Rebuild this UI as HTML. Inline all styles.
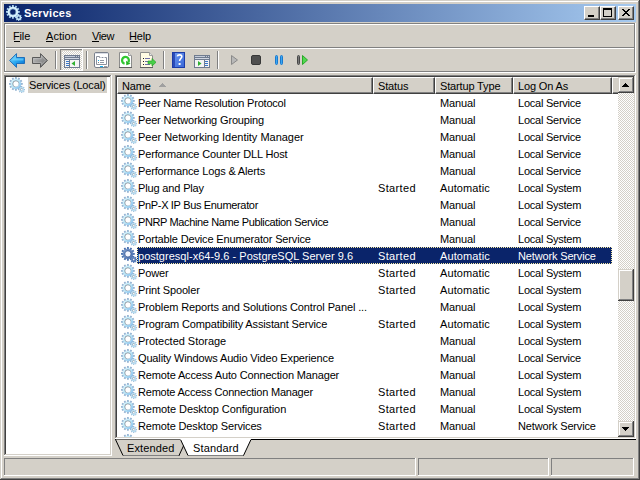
<!DOCTYPE html><html><head><meta charset="utf-8"><title>Services</title><style>
*{margin:0;padding:0;box-sizing:border-box}
html,body{width:640px;height:480px;overflow:hidden;background:#d4d0c8;font-family:"Liberation Sans",sans-serif;font-size:11px;color:#000}
.a{position:absolute}
.t{position:absolute;white-space:nowrap;letter-spacing:-0.15px;line-height:17px}
</style></head><body><svg width="0" height="0" style="position:absolute"><defs><linearGradient id="gg" x1="0" y1="0" x2="1" y2="1"><stop offset="0" stop-color="#e0f8ff"/><stop offset="0.5" stop-color="#b8e6f8"/><stop offset="1" stop-color="#7ab8ee"/></linearGradient><linearGradient id="grim" x1="0" y1="0" x2="1" y2="1"><stop offset="0" stop-color="#5c6670"/><stop offset="0.6" stop-color="#8898a8"/><stop offset="1" stop-color="#b0d8f4"/></linearGradient><linearGradient id="ggS" x1="0" y1="0" x2="1" y2="1"><stop offset="0" stop-color="#7c9ccc"/><stop offset="1" stop-color="#4a70b0"/></linearGradient><symbol id="gearN" viewBox="0 0 16 16"><path d="M7.95,2.30 L7.79,0.00 L6.01,-0.00 L5.85,2.30ZM10.11,3.44 L11.12,1.37 L9.58,0.48 L8.29,2.39ZM11.41,5.51 L13.32,4.22 L12.43,2.68 L10.36,3.69ZM11.50,7.95 L13.80,7.79 L13.80,6.01 L11.50,5.85ZM10.36,10.11 L12.43,11.12 L13.32,9.58 L11.41,8.29ZM8.29,11.41 L9.58,13.32 L11.12,12.43 L10.11,10.36ZM5.85,11.50 L6.01,13.80 L7.79,13.80 L7.95,11.50ZM3.69,10.36 L2.68,12.43 L4.22,13.32 L5.51,11.41ZM2.39,8.29 L0.48,9.58 L1.37,11.12 L3.44,10.11ZM2.30,5.85 L-0.00,6.01 L0.00,7.79 L2.30,7.95ZM3.44,3.69 L1.37,2.68 L0.48,4.22 L2.39,5.51ZM5.51,2.39 L4.22,0.48 L2.68,1.37 L3.69,3.44Z" fill="#98b6d4"/><path d="M1.70,6.90 a5.2,5.2 0 1,0 10.4,0 a5.2,5.2 0 1,0 -10.4,0ZM3.90,6.90 a3.0,3.0 0 1,0 6.0,0 a3.0,3.0 0 1,0 -6.0,0Z" fill="url(#gg)" fill-rule="evenodd"/><circle cx="6.9" cy="6.9" r="3.0" fill="#fff"/><circle cx="6.9" cy="6.9" r="3.1" fill="none" stroke="url(#grim)" stroke-width="0.7"/><path d="M15.00,13.20 L16.20,13.11 L16.20,12.09 L15.00,12.00ZM13.90,14.65 L14.81,15.44 L15.54,14.71 L14.75,13.80ZM12.10,14.90 L12.19,16.10 L13.21,16.10 L13.30,14.90ZM10.65,13.80 L9.86,14.71 L10.59,15.44 L11.50,14.65ZM10.40,12.00 L9.20,12.09 L9.20,13.11 L10.40,13.20ZM11.50,10.55 L10.59,9.76 L9.86,10.49 L10.65,11.40ZM13.30,10.30 L13.21,9.10 L12.19,9.10 L12.10,10.30ZM14.75,11.40 L15.54,10.49 L14.81,9.76 L13.90,10.55Z" fill="#98b6d4"/><path d="M10.10,12.60 a2.6,2.6 0 1,0 5.2,0 a2.6,2.6 0 1,0 -5.2,0ZM11.70,12.60 a1.0,1.0 0 1,0 2.0,0 a1.0,1.0 0 1,0 -2.0,0Z" fill="#b8def2" fill-rule="evenodd"/><circle cx="12.7" cy="12.6" r="1.0" fill="#fff"/><circle cx="12.7" cy="12.6" r="1.1" fill="none" stroke="url(#grim)" stroke-width="0.5"/></symbol><symbol id="gearS" viewBox="0 0 16 16"><path d="M7.95,2.30 L7.79,0.00 L6.01,-0.00 L5.85,2.30ZM10.11,3.44 L11.12,1.37 L9.58,0.48 L8.29,2.39ZM11.41,5.51 L13.32,4.22 L12.43,2.68 L10.36,3.69ZM11.50,7.95 L13.80,7.79 L13.80,6.01 L11.50,5.85ZM10.36,10.11 L12.43,11.12 L13.32,9.58 L11.41,8.29ZM8.29,11.41 L9.58,13.32 L11.12,12.43 L10.11,10.36ZM5.85,11.50 L6.01,13.80 L7.79,13.80 L7.95,11.50ZM3.69,10.36 L2.68,12.43 L4.22,13.32 L5.51,11.41ZM2.39,8.29 L0.48,9.58 L1.37,11.12 L3.44,10.11ZM2.30,5.85 L-0.00,6.01 L0.00,7.79 L2.30,7.95ZM3.44,3.69 L1.37,2.68 L0.48,4.22 L2.39,5.51ZM5.51,2.39 L4.22,0.48 L2.68,1.37 L3.69,3.44Z" fill="#4c72b0"/><path d="M1.70,6.90 a5.2,5.2 0 1,0 10.4,0 a5.2,5.2 0 1,0 -10.4,0ZM3.90,6.90 a3.0,3.0 0 1,0 6.0,0 a3.0,3.0 0 1,0 -6.0,0Z" fill="url(#ggS)" fill-rule="evenodd"/><circle cx="6.9" cy="6.9" r="3.0" fill="#f4f6ff"/><circle cx="6.9" cy="6.9" r="3.1" fill="none" stroke="#284a88" stroke-width="0.7"/><path d="M15.00,13.20 L16.20,13.11 L16.20,12.09 L15.00,12.00ZM13.90,14.65 L14.81,15.44 L15.54,14.71 L14.75,13.80ZM12.10,14.90 L12.19,16.10 L13.21,16.10 L13.30,14.90ZM10.65,13.80 L9.86,14.71 L10.59,15.44 L11.50,14.65ZM10.40,12.00 L9.20,12.09 L9.20,13.11 L10.40,13.20ZM11.50,10.55 L10.59,9.76 L9.86,10.49 L10.65,11.40ZM13.30,10.30 L13.21,9.10 L12.19,9.10 L12.10,10.30ZM14.75,11.40 L15.54,10.49 L14.81,9.76 L13.90,10.55Z" fill="#4c72b0"/><path d="M10.10,12.60 a2.6,2.6 0 1,0 5.2,0 a2.6,2.6 0 1,0 -5.2,0ZM11.70,12.60 a1.0,1.0 0 1,0 2.0,0 a1.0,1.0 0 1,0 -2.0,0Z" fill="#5a80bc" fill-rule="evenodd"/><circle cx="12.7" cy="12.6" r="1.0" fill="#f4f6ff"/><circle cx="12.7" cy="12.6" r="1.1" fill="none" stroke="#284a88" stroke-width="0.5"/></symbol><symbol id="gearT" viewBox="0 0 16 16"><path d="M7.95,2.30 L7.79,0.00 L6.01,-0.00 L5.85,2.30ZM10.11,3.44 L11.12,1.37 L9.58,0.48 L8.29,2.39ZM11.41,5.51 L13.32,4.22 L12.43,2.68 L10.36,3.69ZM11.50,7.95 L13.80,7.79 L13.80,6.01 L11.50,5.85ZM10.36,10.11 L12.43,11.12 L13.32,9.58 L11.41,8.29ZM8.29,11.41 L9.58,13.32 L11.12,12.43 L10.11,10.36ZM5.85,11.50 L6.01,13.80 L7.79,13.80 L7.95,11.50ZM3.69,10.36 L2.68,12.43 L4.22,13.32 L5.51,11.41ZM2.39,8.29 L0.48,9.58 L1.37,11.12 L3.44,10.11ZM2.30,5.85 L-0.00,6.01 L0.00,7.79 L2.30,7.95ZM3.44,3.69 L1.37,2.68 L0.48,4.22 L2.39,5.51ZM5.51,2.39 L4.22,0.48 L2.68,1.37 L3.69,3.44Z" fill="#a8d0ec"/><path d="M1.70,6.90 a5.2,5.2 0 1,0 10.4,0 a5.2,5.2 0 1,0 -10.4,0ZM3.90,6.90 a3.0,3.0 0 1,0 6.0,0 a3.0,3.0 0 1,0 -6.0,0Z" fill="#dcf4ff" fill-rule="evenodd"/><circle cx="6.9" cy="6.9" r="3.1" fill="none" stroke="#8ab0d0" stroke-width="0.7"/><path d="M15.00,13.20 L16.20,13.11 L16.20,12.09 L15.00,12.00ZM13.90,14.65 L14.81,15.44 L15.54,14.71 L14.75,13.80ZM12.10,14.90 L12.19,16.10 L13.21,16.10 L13.30,14.90ZM10.65,13.80 L9.86,14.71 L10.59,15.44 L11.50,14.65ZM10.40,12.00 L9.20,12.09 L9.20,13.11 L10.40,13.20ZM11.50,10.55 L10.59,9.76 L9.86,10.49 L10.65,11.40ZM13.30,10.30 L13.21,9.10 L12.19,9.10 L12.10,10.30ZM14.75,11.40 L15.54,10.49 L14.81,9.76 L13.90,10.55Z" fill="#a8d0ec"/><path d="M10.10,12.60 a2.6,2.6 0 1,0 5.2,0 a2.6,2.6 0 1,0 -5.2,0ZM11.70,12.60 a1.0,1.0 0 1,0 2.0,0 a1.0,1.0 0 1,0 -2.0,0Z" fill="#c8e8f8" fill-rule="evenodd"/><circle cx="12.7" cy="12.6" r="1.1" fill="none" stroke="#8ab0d0" stroke-width="0.5"/></symbol></defs></svg><div class="a" style="left:0px;top:0px;width:640px;height:480px;background:#d4d0c8;"></div><div class="a" style="left:0px;top:479px;width:640px;height:1px;background:#404040;"></div><div class="a" style="left:639px;top:0px;width:1px;height:480px;background:#404040;"></div><div class="a" style="left:1px;top:478px;width:638px;height:1px;background:#808080;"></div><div class="a" style="left:638px;top:1px;width:1px;height:478px;background:#808080;"></div><div class="a" style="left:1px;top:1px;width:637px;height:1px;background:#fff;"></div><div class="a" style="left:1px;top:1px;width:1px;height:477px;background:#fff;"></div><div class="a" style="left:4px;top:4px;width:632px;height:18px;background:linear-gradient(to right,#0a246a,#a6caf0);"></div><svg class="a" style="left:6px;top:5px" width="16" height="16" viewBox="0 0 16 16"><use href="#gearT"/></svg><div class="t" style="left:24px;top:4px;color:#fff;font-weight:bold;letter-spacing:0.3px;line-height:18px">Services</div><div class="a" style="left:584px;top:6px;width:16px;height:14px;background:#d4d0c8;border-top:1px solid #fff;border-left:1px solid #fff;border-right:1px solid #404040;border-bottom:1px solid #404040;box-shadow:inset -1px -1px 0 #808080"><div class="a" style="left:3px;top:8px;width:6px;height:2px;background:#000"></div></div><div class="a" style="left:600px;top:6px;width:16px;height:14px;background:#d4d0c8;border-top:1px solid #fff;border-left:1px solid #fff;border-right:1px solid #404040;border-bottom:1px solid #404040;box-shadow:inset -1px -1px 0 #808080"><div class="a" style="left:2px;top:1px;width:9px;height:9px;border:1px solid #000;border-top-width:2px"></div></div><div class="a" style="left:618px;top:6px;width:16px;height:14px;background:#d4d0c8;border-top:1px solid #fff;border-left:1px solid #fff;border-right:1px solid #404040;border-bottom:1px solid #404040;box-shadow:inset -1px -1px 0 #808080"><svg class="a" style="left:3px;top:2px" width="8" height="7" viewBox="0 0 8 7"><path d="M0,0h2l2,2.3l2,-2.3h2l-3,3.5l3,3.5h-2l-2,-2.3l-2,2.3h-2l3,-3.5z" fill="#000" shape-rendering="crispEdges"/></svg></div><div class="a" style="left:4px;top:23px;width:632px;height:1px;background:#808080;"></div><div class="a" style="left:4px;top:23px;width:1px;height:49px;background:#808080;"></div><div class="a" style="left:5px;top:24px;width:630px;height:1px;background:#fff;"></div><div class="a" style="left:5px;top:24px;width:1px;height:47px;background:#fff;"></div><div class="a" style="left:634px;top:24px;width:1px;height:48px;background:#808080;"></div><div class="a" style="left:635px;top:23px;width:1px;height:50px;background:#fff;"></div><div class="a" style="left:6px;top:47px;width:628px;height:1px;background:#808080;"></div><div class="a" style="left:6px;top:48px;width:628px;height:1px;background:#fff;"></div><div class="a" style="left:4px;top:71px;width:631px;height:1px;background:#808080;"></div><div class="a" style="left:4px;top:72px;width:632px;height:1px;background:#fff;"></div><div class="t" style="left:13px;top:28px;line-height:17px;letter-spacing:-0.15px">File</div><div class="a" style="left:14px;top:41px;width:6px;height:1px;background:#000;"></div><div class="t" style="left:46px;top:28px;line-height:17px;letter-spacing:0.05px">Action</div><div class="a" style="left:46px;top:41px;width:7px;height:1px;background:#000;"></div><div class="t" style="left:92px;top:28px;line-height:17px;letter-spacing:-0.4px">View</div><div class="a" style="left:92px;top:41px;width:7px;height:1px;background:#000;"></div><div class="t" style="left:129px;top:28px;line-height:17px;letter-spacing:-0.15px">Help</div><div class="a" style="left:130px;top:41px;width:8px;height:1px;background:#000;"></div><svg class="a" style="left:0;top:48px" width="320" height="24" viewBox="0 48 320 24"><defs><linearGradient id="gBack" x1="0" y1="0" x2="1" y2="1"><stop offset="0" stop-color="#8ee0ff"/><stop offset="0.5" stop-color="#2aa8f0"/><stop offset="1" stop-color="#0066cc"/></linearGradient><linearGradient id="gFwd" x1="0" y1="0" x2="1" y2="1"><stop offset="0" stop-color="#c8c8c8"/><stop offset="0.5" stop-color="#969696"/><stop offset="1" stop-color="#6e6e6e"/></linearGradient><linearGradient id="gHelp" x1="0" y1="0" x2="1" y2="1"><stop offset="0" stop-color="#6c98f0"/><stop offset="1" stop-color="#3a68d8"/></linearGradient><pattern id="dith" width="2" height="2" patternUnits="userSpaceOnUse"><rect width="2" height="2" fill="#d4d0c8"/><rect width="1" height="1" fill="#fff"/><rect x="1" y="1" width="1" height="1" fill="#fff"/></pattern></defs><path d="M9.6,60.5 L16.5,53.6 V57.5 H24.5 V63.5 H16.5 V67.4 Z" fill="url(#gBack)" stroke="#1468b8" stroke-width="0.9" stroke-linejoin="miter"/><path d="M11.5,60.3 L15.8,56 V58.6 H23.3 V60.6 H15.8 Z" fill="#7ad8ff" opacity="0.6"/><path d="M47.4,60.5 L40.5,53.6 V57.5 H32.5 V63.5 H40.5 V67.4 Z" fill="url(#gFwd)" stroke="#4e4e4e" stroke-width="0.9"/><path d="M33.7,58.6 H41.3 V56 L45.5,60.3 L41.3,64.6 V62.4 H33.7 Z" fill="none" stroke="#d8d8d8" stroke-width="0.5" opacity="0.7"/><rect x="55" y="51" width="1" height="18" fill="#808080"/><rect x="56" y="51" width="1" height="18" fill="#fff"/><rect x="86" y="51" width="1" height="18" fill="#808080"/><rect x="87" y="51" width="1" height="18" fill="#fff"/><rect x="163" y="51" width="1" height="18" fill="#808080"/><rect x="164" y="51" width="1" height="18" fill="#fff"/><rect x="217" y="51" width="1" height="18" fill="#808080"/><rect x="218" y="51" width="1" height="18" fill="#fff"/><rect x="60" y="49" width="23" height="22" fill="#fff"/><rect x="60" y="49" width="22" height="21" fill="#808080"/><rect x="61" y="50" width="21" height="20" fill="url(#dith)"/><rect x="61" y="50" width="21" height="1" fill="#d4d0c8"/><rect x="61" y="50" width="1" height="20" fill="#d4d0c8"/><rect x="64.5" y="55.5" width="15" height="12" fill="#f4f4f4" stroke="#6f7b8f"/><rect x="65" y="56" width="14" height="1" fill="#c4ccda"/><rect x="65" y="57" width="14" height="1" fill="#6f7b8f"/><rect x="65" y="58" width="14" height="1" fill="#d0d6e2"/><rect x="65" y="59" width="14" height="1" fill="#6f7b8f"/><rect x="75" y="56" width="1" height="1" fill="#6f7b8f"/><rect x="77" y="56" width="1" height="1" fill="#6f7b8f"/><rect x="69" y="60" width="1" height="7" fill="#6f7b8f"/><rect x="66" y="61" width="3" height="1" fill="#3a78c8"/><rect x="66" y="63" width="3" height="1" fill="#3a78c8"/><rect x="66" y="65" width="3" height="1" fill="#3a78c8"/><path d="M71.5,63.5 L75,61 V66 Z" fill="#30b030"/><rect x="94.5" y="52.5" width="14" height="15" rx="1.5" fill="#fff" stroke="#7a808c"/><rect x="95" y="53" width="13" height="1" fill="#d8dce4"/><path d="M96.5,56.5 H99.5 V57.5 H106.5 V64.5 H96.5 Z" fill="#fff" stroke="#8a909c"/><rect x="100" y="57" width="2" height="1" fill="#c8ccd4"/><rect x="103" y="57" width="2" height="1" fill="#c8ccd4"/><rect x="98" y="60" width="1" height="1" fill="#10b0f0"/><rect x="98" y="62" width="1" height="1" fill="#808080"/><rect x="100" y="60" width="4" height="1" fill="#9098a4"/><rect x="100" y="62" width="4" height="1" fill="#9098a4"/><rect x="100" y="66" width="3" height="1" fill="#10b0f0"/><rect x="104" y="66" width="3" height="1" fill="#a0a0a0"/><path d="M119.5,52.5 H128.5 L131.5,55.5 V67.5 H119.5 Z" fill="#fff" stroke="#8c8c8c"/><path d="M128.5,52.5 V55.5 H131.5" fill="#e8e8e8" stroke="#a0a0a0"/><rect x="119" y="67" width="13" height="1" fill="#606060"/><path d="M124.6,63.65 A3.4,3.4 0 1,1 128.29,62.25" fill="none" stroke="#30c830" stroke-width="2.3"/><path d="M130.5,63.8 L126.1,60.7 L126.3,65.2 Z" fill="#22b422"/><path d="M140.5,52.5 H149.5 L152.5,55.5 V67.5 H140.5 Z" fill="#fffbe4" stroke="#8c8c8c"/><path d="M149.5,52.5 V55.5 H152.5" fill="#e8e8e8" stroke="#a0a0a0"/><rect x="140" y="67" width="13" height="1" fill="#606060"/><rect x="143" y="58" width="1" height="1" fill="#202020"/><rect x="143" y="61" width="1" height="1" fill="#202020"/><rect x="143" y="64" width="1" height="1" fill="#202020"/><rect x="145" y="58" width="5" height="1" fill="#7070a8"/><rect x="145" y="61" width="5" height="1" fill="#7070a8"/><rect x="145" y="64" width="5" height="1" fill="#7070a8"/><path d="M148,61 H152 V58.5 L156,62.3 L152,66 V63.8 H148 Z" fill="#48d048" stroke="#28a028" stroke-width="0.7"/><rect x="172" y="52" width="13" height="16" fill="#1c3ca8"/><rect x="173" y="53" width="11" height="14" fill="url(#gHelp)"/><rect x="173" y="53" width="2" height="14" fill="#2c4cb8"/><path d="M177.3,56.3 C177.6,54.4 181.8,54.2 181.8,56.6 C181.8,58.4 179.6,58.8 179.6,61" fill="none" stroke="#fff" stroke-width="1.6"/><rect x="178.6" y="63" width="2" height="2" fill="#fff"/><rect x="194.5" y="55.5" width="15" height="12" fill="#f4f4f4" stroke="#6f7b8f"/><rect x="195" y="56" width="14" height="1" fill="#c4ccda"/><rect x="195" y="57" width="14" height="1" fill="#6f7b8f"/><rect x="195" y="58" width="14" height="1" fill="#d0d6e2"/><rect x="195" y="59" width="14" height="1" fill="#6f7b8f"/><rect x="205" y="56" width="1" height="1" fill="#6f7b8f"/><rect x="207" y="56" width="1" height="1" fill="#6f7b8f"/><rect x="204" y="60" width="1" height="7" fill="#6f7b8f"/><rect x="205" y="61" width="3" height="1" fill="#3a78c8"/><rect x="205" y="63" width="3" height="1" fill="#3a78c8"/><rect x="205" y="65" width="3" height="1" fill="#3a78c8"/><path d="M198,61 L201.5,63.5 L198,66 Z" fill="#30b030"/><path d="M231.5,55.5 L237.5,60 L231.5,64.5 Z" fill="#b8b8b8" stroke="#8a8a8a"/><rect x="251.5" y="55.5" width="9" height="9" rx="1.5" fill="#505050" stroke="#383838"/><rect x="275.5" y="55.5" width="2" height="9" rx="1" fill="#3aa8f0" stroke="#1a78d0"/><rect x="280.5" y="55.5" width="2" height="9" rx="1" fill="#3aa8f0" stroke="#1a78d0"/><rect x="297.5" y="55.5" width="2" height="9" rx="1" fill="#787878" stroke="#484848"/><path d="M302.5,55.5 L307.5,60 L302.5,64.5 Z" fill="#50d850" stroke="#28a828"/></svg><div class="a" style="left:4px;top:75px;width:108px;height:381px;background:#fff;"></div><div class="a" style="left:4px;top:75px;width:107px;height:380px;background:#808080;"></div><div class="a" style="left:5px;top:76px;width:106px;height:379px;background:#d4d0c8;"></div><div class="a" style="left:5px;top:76px;width:105px;height:378px;background:#404040;"></div><div class="a" style="left:6px;top:77px;width:104px;height:377px;background:#fff;"></div><div class="a" style="left:115px;top:75px;width:521px;height:364px;background:#fff;"></div><div class="a" style="left:115px;top:75px;width:520px;height:363px;background:#808080;"></div><div class="a" style="left:116px;top:76px;width:519px;height:362px;background:#d4d0c8;"></div><div class="a" style="left:116px;top:76px;width:518px;height:361px;background:#404040;"></div><div class="a" style="left:117px;top:77px;width:517px;height:360px;background:#fff;"></div><svg class="a" style="left:9px;top:77px" width="16" height="16" viewBox="0 0 16 16"><use href="#gearN"/></svg><div class="a" style="left:28px;top:77px;width:79px;height:16px;background:#d4d0c8;"></div><div class="t" style="left:29px;top:77px;line-height:16px">Services (Local)</div><div class="a" style="left:117px;top:77px;width:256px;height:17px;background:#d4d0c8;border-left:1px solid #fff;border-top:1px solid #fff;border-right:1px solid #404040;border-bottom:1px solid #404040;box-shadow:inset -1px -1px 0 #808080"></div><div class="t" style="left:122px;top:78px;line-height:17px">Name</div><div class="a" style="left:373px;top:77px;width:62px;height:17px;background:#d4d0c8;border-left:1px solid #fff;border-top:1px solid #fff;border-right:1px solid #404040;border-bottom:1px solid #404040;box-shadow:inset -1px -1px 0 #808080"></div><div class="t" style="left:378px;top:78px;line-height:17px">Status</div><div class="a" style="left:435px;top:77px;width:78px;height:17px;background:#d4d0c8;border-left:1px solid #fff;border-top:1px solid #fff;border-right:1px solid #404040;border-bottom:1px solid #404040;box-shadow:inset -1px -1px 0 #808080"></div><div class="t" style="left:440px;top:78px;line-height:17px">Startup Type</div><div class="a" style="left:513px;top:77px;width:99px;height:17px;background:#d4d0c8;border-left:1px solid #fff;border-top:1px solid #fff;border-right:1px solid #404040;border-bottom:1px solid #404040;box-shadow:inset -1px -1px 0 #808080"></div><div class="t" style="left:518px;top:78px;line-height:17px">Log On As</div><div class="a" style="left:612px;top:77px;width:22px;height:17px;background:#d4d0c8;border-left:1px solid #fff;border-top:1px solid #fff;border-right:1px solid #404040;border-bottom:1px solid #404040;box-shadow:inset -1px -1px 0 #808080"></div><svg class="a" style="left:159px;top:83px" width="7" height="4" viewBox="0 0 7 4"><path d="M3,0h1v1h1v1h1v1h1v1h-7v-1h1v-1h1v-1h1z" fill="#a0a0a0" shape-rendering="crispEdges"/></svg><svg class="a" style="left:121px;top:94px" width="16" height="16" viewBox="0 0 16 16"><use href="#gearN"/></svg><div class="t" style="left:138px;top:95px;letter-spacing:-0.22px;">Peer Name Resolution Protocol</div><div class="t" style="left:440px;top:95px;">Manual</div><div class="t" style="left:518px;top:95px;letter-spacing:-0.24px;">Local Service</div><svg class="a" style="left:121px;top:111px" width="16" height="16" viewBox="0 0 16 16"><use href="#gearN"/></svg><div class="t" style="left:138px;top:112px;">Peer Networking Grouping</div><div class="t" style="left:440px;top:112px;">Manual</div><div class="t" style="left:518px;top:112px;letter-spacing:-0.24px;">Local Service</div><svg class="a" style="left:121px;top:128px" width="16" height="16" viewBox="0 0 16 16"><use href="#gearN"/></svg><div class="t" style="left:138px;top:129px;letter-spacing:-0.02px;">Peer Networking Identity Manager</div><div class="t" style="left:440px;top:129px;">Manual</div><div class="t" style="left:518px;top:129px;letter-spacing:-0.24px;">Local Service</div><svg class="a" style="left:121px;top:145px" width="16" height="16" viewBox="0 0 16 16"><use href="#gearN"/></svg><div class="t" style="left:138px;top:146px;">Performance Counter DLL Host</div><div class="t" style="left:440px;top:146px;">Manual</div><div class="t" style="left:518px;top:146px;letter-spacing:-0.24px;">Local Service</div><svg class="a" style="left:121px;top:162px" width="16" height="16" viewBox="0 0 16 16"><use href="#gearN"/></svg><div class="t" style="left:138px;top:163px;">Performance Logs &amp; Alerts</div><div class="t" style="left:440px;top:163px;">Manual</div><div class="t" style="left:518px;top:163px;letter-spacing:-0.24px;">Local Service</div><svg class="a" style="left:121px;top:179px" width="16" height="16" viewBox="0 0 16 16"><use href="#gearN"/></svg><div class="t" style="left:138px;top:180px;">Plug and Play</div><div class="t" style="left:378px;top:180px;letter-spacing:0.35px;">Started</div><div class="t" style="left:440px;top:180px;letter-spacing:0.1px;">Automatic</div><div class="t" style="left:518px;top:180px;letter-spacing:-0.24px;">Local System</div><svg class="a" style="left:121px;top:196px" width="16" height="16" viewBox="0 0 16 16"><use href="#gearN"/></svg><div class="t" style="left:138px;top:197px;letter-spacing:-0.33px;">PnP-X IP Bus Enumerator</div><div class="t" style="left:440px;top:197px;">Manual</div><div class="t" style="left:518px;top:197px;letter-spacing:-0.24px;">Local System</div><svg class="a" style="left:121px;top:213px" width="16" height="16" viewBox="0 0 16 16"><use href="#gearN"/></svg><div class="t" style="left:138px;top:214px;letter-spacing:-0.37px;">PNRP Machine Name Publication Service</div><div class="t" style="left:440px;top:214px;">Manual</div><div class="t" style="left:518px;top:214px;letter-spacing:-0.24px;">Local Service</div><svg class="a" style="left:121px;top:230px" width="16" height="16" viewBox="0 0 16 16"><use href="#gearN"/></svg><div class="t" style="left:138px;top:231px;">Portable Device Enumerator Service</div><div class="t" style="left:440px;top:231px;">Manual</div><div class="t" style="left:518px;top:231px;letter-spacing:-0.24px;">Local System</div><div class="a" style="left:137px;top:247px;width:475px;height:17px;background:#0a246a;outline:1px dotted #f5e9a0;outline-offset:-1px"></div><svg class="a" style="left:121px;top:247px" width="16" height="16" viewBox="0 0 16 16"><use href="#gearS"/></svg><div class="t" style="left:138px;top:248px;color:#fff;letter-spacing:0.02px;">postgresql-x64-9.6 - PostgreSQL Server 9.6</div><div class="t" style="left:378px;top:248px;color:#fff;letter-spacing:0.35px;">Started</div><div class="t" style="left:440px;top:248px;color:#fff;letter-spacing:0.1px;">Automatic</div><div class="t" style="left:518px;top:248px;color:#fff;">Network Service</div><svg class="a" style="left:121px;top:264px" width="16" height="16" viewBox="0 0 16 16"><use href="#gearN"/></svg><div class="t" style="left:138px;top:265px;">Power</div><div class="t" style="left:378px;top:265px;letter-spacing:0.35px;">Started</div><div class="t" style="left:440px;top:265px;letter-spacing:0.1px;">Automatic</div><div class="t" style="left:518px;top:265px;letter-spacing:-0.24px;">Local System</div><svg class="a" style="left:121px;top:281px" width="16" height="16" viewBox="0 0 16 16"><use href="#gearN"/></svg><div class="t" style="left:138px;top:282px;">Print Spooler</div><div class="t" style="left:378px;top:282px;letter-spacing:0.35px;">Started</div><div class="t" style="left:440px;top:282px;letter-spacing:0.1px;">Automatic</div><div class="t" style="left:518px;top:282px;letter-spacing:-0.24px;">Local System</div><svg class="a" style="left:121px;top:298px" width="16" height="16" viewBox="0 0 16 16"><use href="#gearN"/></svg><div class="t" style="left:138px;top:299px;letter-spacing:-0.11px;">Problem Reports and Solutions Control Panel ...</div><div class="t" style="left:440px;top:299px;">Manual</div><div class="t" style="left:518px;top:299px;letter-spacing:-0.24px;">Local System</div><svg class="a" style="left:121px;top:315px" width="16" height="16" viewBox="0 0 16 16"><use href="#gearN"/></svg><div class="t" style="left:138px;top:316px;">Program Compatibility Assistant Service</div><div class="t" style="left:378px;top:316px;letter-spacing:0.35px;">Started</div><div class="t" style="left:440px;top:316px;letter-spacing:0.1px;">Automatic</div><div class="t" style="left:518px;top:316px;letter-spacing:-0.24px;">Local System</div><svg class="a" style="left:121px;top:332px" width="16" height="16" viewBox="0 0 16 16"><use href="#gearN"/></svg><div class="t" style="left:138px;top:333px;letter-spacing:-0.03px;">Protected Storage</div><div class="t" style="left:440px;top:333px;">Manual</div><div class="t" style="left:518px;top:333px;letter-spacing:-0.24px;">Local System</div><svg class="a" style="left:121px;top:349px" width="16" height="16" viewBox="0 0 16 16"><use href="#gearN"/></svg><div class="t" style="left:138px;top:350px;">Quality Windows Audio Video Experience</div><div class="t" style="left:440px;top:350px;">Manual</div><div class="t" style="left:518px;top:350px;letter-spacing:-0.24px;">Local Service</div><svg class="a" style="left:121px;top:366px" width="16" height="16" viewBox="0 0 16 16"><use href="#gearN"/></svg><div class="t" style="left:138px;top:367px;">Remote Access Auto Connection Manager</div><div class="t" style="left:440px;top:367px;">Manual</div><div class="t" style="left:518px;top:367px;letter-spacing:-0.24px;">Local System</div><svg class="a" style="left:121px;top:383px" width="16" height="16" viewBox="0 0 16 16"><use href="#gearN"/></svg><div class="t" style="left:138px;top:384px;letter-spacing:-0.21px;">Remote Access Connection Manager</div><div class="t" style="left:378px;top:384px;letter-spacing:0.35px;">Started</div><div class="t" style="left:440px;top:384px;">Manual</div><div class="t" style="left:518px;top:384px;letter-spacing:-0.24px;">Local System</div><svg class="a" style="left:121px;top:400px" width="16" height="16" viewBox="0 0 16 16"><use href="#gearN"/></svg><div class="t" style="left:138px;top:401px;letter-spacing:-0.08px;">Remote Desktop Configuration</div><div class="t" style="left:378px;top:401px;letter-spacing:0.35px;">Started</div><div class="t" style="left:440px;top:401px;">Manual</div><div class="t" style="left:518px;top:401px;letter-spacing:-0.24px;">Local System</div><svg class="a" style="left:121px;top:417px" width="16" height="16" viewBox="0 0 16 16"><use href="#gearN"/></svg><div class="t" style="left:138px;top:418px;">Remote Desktop Services</div><div class="t" style="left:378px;top:418px;letter-spacing:0.35px;">Started</div><div class="t" style="left:440px;top:418px;">Manual</div><div class="t" style="left:518px;top:418px;">Network Service</div><svg class="a" style="left:121px;top:434px" width="16" height="16" viewBox="0 0 16 16"><use href="#gearN"/></svg><div class="a" style="left:116px;top:437px;width:519px;height:1px;background:#d4d0c8;"></div><div class="a" style="left:115px;top:438px;width:521px;height:1px;background:#fff;"></div><svg class="a" style="left:618px;top:77px" width="16" height="360" viewBox="0 0 16 360" shape-rendering="crispEdges"><defs><pattern id="dith2" width="2" height="2" patternUnits="userSpaceOnUse"><rect width="2" height="2" fill="#d4d0c8"/><rect width="1" height="1" fill="#fff"/><rect x="1" y="1" width="1" height="1" fill="#fff"/></pattern></defs><rect x="0" y="0" width="16" height="360" fill="url(#dith2)"/><rect x="0" y="0" width="16" height="16" fill="#404040"/><rect x="0" y="0" width="15" height="15" fill="#d4d0c8"/><rect x="1" y="1" width="14" height="14" fill="#808080"/><rect x="1" y="1" width="13" height="13" fill="#fff"/><rect x="2" y="2" width="12" height="12" fill="#d4d0c8"/><rect x="0" y="344" width="16" height="16" fill="#404040"/><rect x="0" y="344" width="15" height="15" fill="#d4d0c8"/><rect x="1" y="345" width="14" height="14" fill="#808080"/><rect x="1" y="345" width="13" height="13" fill="#fff"/><rect x="2" y="346" width="12" height="12" fill="#d4d0c8"/><rect x="0" y="192" width="16" height="32" fill="#404040"/><rect x="0" y="192" width="15" height="31" fill="#d4d0c8"/><rect x="1" y="193" width="14" height="30" fill="#808080"/><rect x="1" y="193" width="13" height="29" fill="#fff"/><rect x="2" y="194" width="12" height="28" fill="#d4d0c8"/><path d="M7,6h1v1h1v1h1v1h1v1h-7v-1h1v-1h1v-1h1z" fill="#000"/><path d="M4,350h7v1h-1v1h-1v1h-1v1h-1v-1h-1v-1h-1v-1h-1z" fill="#000"/></svg><svg class="a" style="left:112px;top:436px" width="528" height="24" viewBox="112 436 528 24"><rect x="115" y="439" width="521" height="1" fill="#000"/><path d="M115.5,439.5 L123,455.5 H179 L186.5,439.5" fill="#d4d0c8"/><rect x="123" y="455" width="57" height="1" fill="#808080"/><path d="M115.5,439.5 L123,455.5" stroke="#000" fill="none"/><path d="M186.5,439.5 L179,455.5" stroke="#000" fill="none"/><path d="M180.5,439 L188,455.5 H243.5 L251,439 Z" fill="#fff"/><rect x="188" y="455" width="56" height="1" fill="#808080"/><path d="M180.5,439.5 L188,455.5" stroke="#000" fill="none"/><path d="M251,439.5 L243.5,455.5" stroke="#000" fill="none"/><rect x="180" y="438" width="71" height="1.5" fill="#fff"/></svg><div class="t" style="left:127px;top:440px;line-height:17px;letter-spacing:0.13px">Extended</div><div class="t" style="left:193px;top:440px;line-height:17px;letter-spacing:0.13px">Standard</div><div class="a" style="left:4px;top:458px;width:412px;height:18px;background:#fff;"></div><div class="a" style="left:4px;top:458px;width:411px;height:17px;background:#808080;"></div><div class="a" style="left:5px;top:459px;width:410px;height:16px;background:#d4d0c8;"></div><div class="a" style="left:418px;top:458px;width:131px;height:18px;background:#fff;"></div><div class="a" style="left:418px;top:458px;width:130px;height:17px;background:#808080;"></div><div class="a" style="left:419px;top:459px;width:129px;height:16px;background:#d4d0c8;"></div><div class="a" style="left:551px;top:458px;width:83px;height:18px;background:#fff;"></div><div class="a" style="left:551px;top:458px;width:82px;height:17px;background:#808080;"></div><div class="a" style="left:552px;top:459px;width:81px;height:16px;background:#d4d0c8;"></div></body></html>
